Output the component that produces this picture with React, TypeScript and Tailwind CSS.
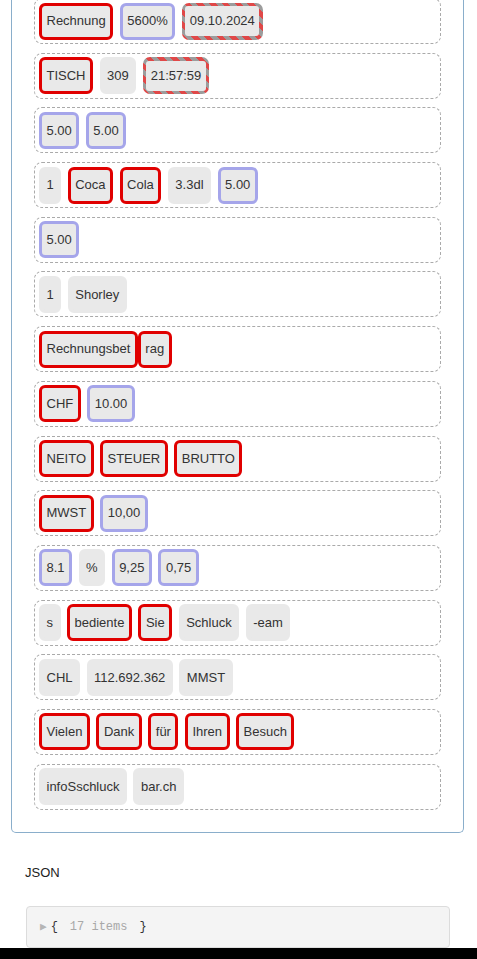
import React from 'react'

type Kind = 'plain' | 'red' | 'blue' | 'stripe'
type Chip = { t: string; k: Kind; join?: boolean }

const p = (t: string): Chip => ({ t, k: 'plain' })
const r = (t: string, join?: boolean): Chip => ({ t, k: 'red', join })
const b = (t: string): Chip => ({ t, k: 'blue' })
const s = (t: string): Chip => ({ t, k: 'stripe' })

const rows: Chip[][] = [
  [r('Rechnung'), b('5600%'), s('09.10.2024')],
  [r('TISCH'), p('309'), s('21:57:59')],
  [b('5.00'), b('5.00')],
  [p('1'), r('Coca'), r('Cola'), p('3.3dl'), b('5.00')],
  [b('5.00')],
  [p('1'), p('Shorley')],
  [r('Rechnungsbet'), r('rag', true)],
  [r('CHF'), b('10.00')],
  [r('NEITO'), r('STEUER'), r('BRUTTO')],
  [r('MWST'), b('10,00')],
  [b('8.1'), p('%'), b('9,25'), b('0,75')],
  [p('s'), r('bediente'), r('Sie'), p('Schluck'), p('-eam')],
  [p('CHL'), p('112.692.362'), p('MMST')],
  [r('Vielen'), r('Dank'), r('für'), r('Ihren'), r('Besuch')],
  [p('infoSschluck'), p('bar.ch')],
]

function Token({ chip }: { chip: Chip }) {
  const gap = chip.join ? 'ml-0' : 'ml-[6.5px] first:ml-0'
  if (chip.k === 'stripe') {
    return (
      <span
        className={`${gap} h-[37px] rounded-[7px] p-[3.5px] bg-[repeating-linear-gradient(45deg,#e04848_0px,#e04848_4.5px,#9c9c9c_4.5px,#9c9c9c_9px)]`}
      >
        <span className="flex h-full items-center rounded-[3px] bg-[#e9e9e9] px-[4.5px]">{chip.t}</span>
      </span>
    )
  }
  const border =
    chip.k === 'red'
      ? 'border-[#e00000]'
      : chip.k === 'blue'
        ? 'border-[#a5a5ea]'
        : 'border-[#e9e9e9]'
  return (
    <span
      className={`${gap} flex h-[37px] items-center rounded-[6px] border-[3.5px] ${border} bg-[#e9e9e9] px-[4.5px]`}
    >
      {chip.t}
    </span>
  )
}

export default function App() {
  return (
    <div className="flex h-[959px] flex-col overflow-hidden bg-white font-['Liberation_Sans',Arial,sans-serif] text-[13px] text-[#333]">
      {/* token panel */}
      <div className="-mt-[2px] ml-[11px] mr-[13px] rounded-b-[5px] border-x border-b border-[#8aaecb] px-[22px] pb-[22px]">
        <div className="flex flex-col gap-[8.7px]">
          {rows.map((row, i) => (
            <div
              key={i}
              className="flex h-[46px] items-center rounded-[8px] border border-dashed border-[#aaaaaa] px-[4px]"
            >
              {row.map((c, j) => (
                <Token key={j} chip={c} />
              ))}
            </div>
          ))}
        </div>
      </div>

      {/* JSON */}
      <div className="mt-[32px] pl-[25px] leading-[15px] text-[#222]">JSON</div>
      <div className="ml-[26px] mr-[27px] mt-[26px] flex h-[43px] items-center rounded-[4px] border border-[#dcdcdc] bg-[#f4f4f4] pl-[13px] font-['Liberation_Mono',monospace] text-[12px]">
        <span className="mr-[4px] text-[11px] text-[#b5b5b5]">▶</span>
        <span className="text-[#333]">{'{'}</span>
        <span className="mx-[12px] text-[#a8a8a8]">17 items</span>
        <span className="text-[#333]">{'}'}</span>
      </div>
      <div className="mt-auto h-[11px] bg-black" />
    </div>
  )
}
